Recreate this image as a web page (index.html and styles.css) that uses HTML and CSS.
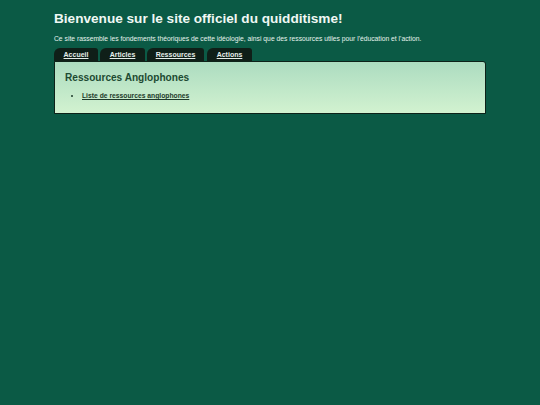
FILE: index.html
```html
<!DOCTYPE html>
<html lang="fr">
<head>
<meta charset="utf-8">
<title>Quidditisme</title>
<link rel="stylesheet" href="styles.css">
</head>
<body>
<div class="page">
  <h1 class="title">Bienvenue sur le site officiel du quidditisme!</h1>
  <p class="intro">Ce site rassemble les fondements théoriques de cette idéologie, ainsi que des ressources utiles pour l'éducation et l'action.</p>
  <nav class="tabs">
    <a class="tab" href="#">Accueil</a>
    <a class="tab" href="#">Articles</a>
    <a class="tab" href="#">Ressources</a>
    <a class="tab" href="#">Actions</a>
  </nav>
  <section class="panel">
    <h2 class="panel-title">Ressources Anglophones</h2>
    <ul class="links">
      <li><a href="#">Liste de ressources anglophones</a></li>
    </ul>
  </section>
</div>
</body>
</html>
```

FILE: styles.css
```css
html, body {
  margin: 0;
  padding: 0;
  background: #0b5a45;
}
body {
  font-family: "Liberation Sans", Arial, sans-serif;
  color: #e8f4ee;
}
.page {
  width: 432px;
  margin: 0 auto;
  padding-top: 10px;
}
.title {
  margin: 0;
  font-size: 13.6px;
  line-height: 17px;
  font-weight: bold;
  color: #f0f8f4;
}
.intro {
  margin: 7px 0 0;
  font-size: 6.75px;
  line-height: 9px;
  color: #e8f4ee;
}
.tabs {
  display: flex;
  gap: 2px;
  margin-top: 5px;
  height: 13px;
}
.tab {
  display: block;
  background: #0f1f18;
  color: #e6eee9;
  font-size: 7px;
  font-weight: bold;
  line-height: 13px;
  text-align: center;
  border-radius: 6px 3px 0 0;
  text-decoration: underline;
}
.tab:nth-child(1) { width: 44px; }
.tab:nth-child(2) { width: 45px; }
.tab:nth-child(3) { width: 57px; margin-right: 1px; }
.tab:nth-child(4) { width: 45px; }
.panel {
  border: 1px solid #0d2219;
  border-radius: 0 3px 0 0;
  background: linear-gradient(#acdcc0, #d2f2d0);
  padding: 9px 10px 10px;
  height: 32px;
}
.panel-title {
  margin: 0;
  font-size: 10.1px;
  line-height: 13px;
  font-weight: bold;
  color: #1d4a32;
}
.links {
  margin: 7px 0 0;
  padding-left: 17px;
  font-size: 6.75px;
  line-height: 9px;
  color: #1d3a2a;
}
.links a {
  color: #1d3a2a;
  font-weight: bold;
  text-decoration: underline;
}
```
